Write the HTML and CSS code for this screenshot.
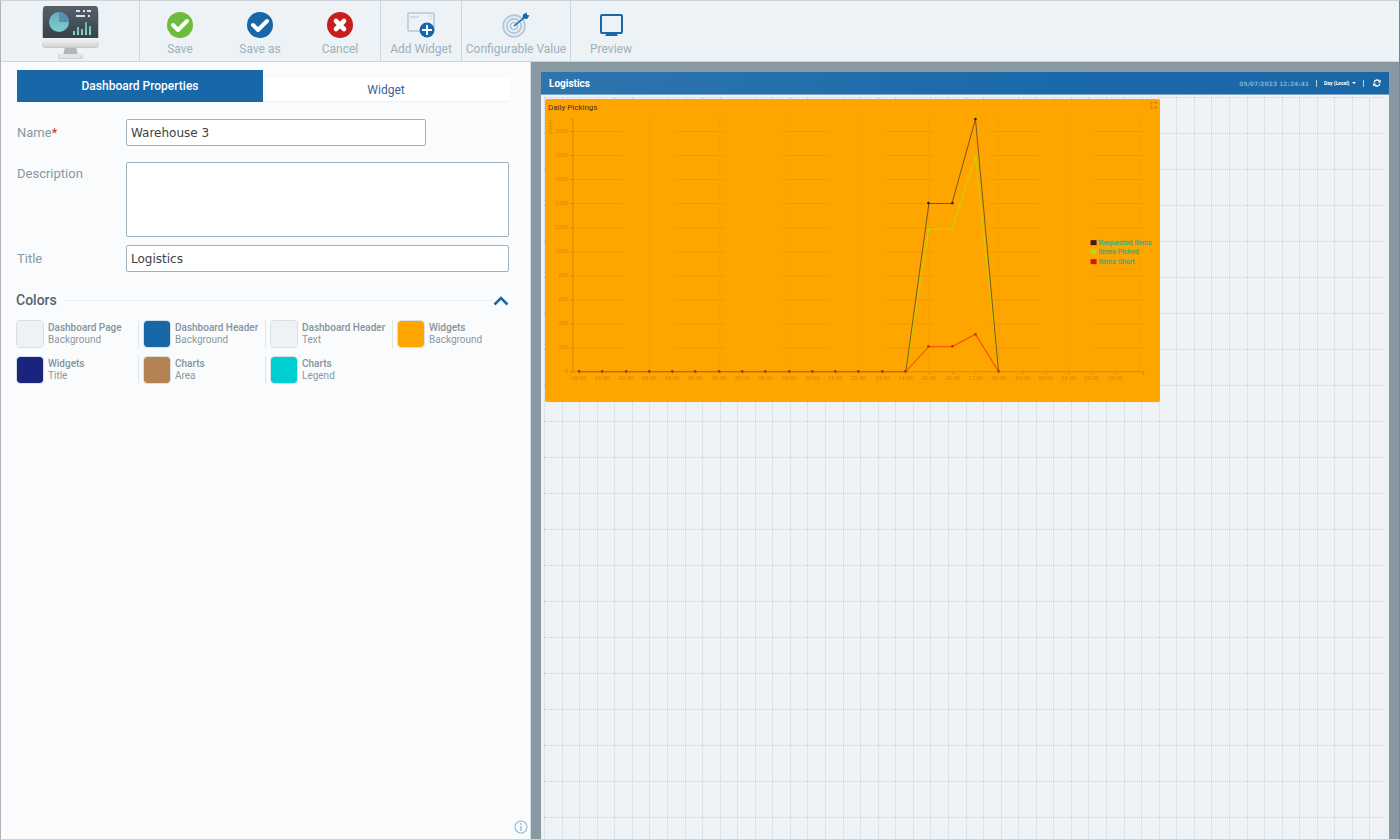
FILE: index.html
```html
<!DOCTYPE html>
<html lang="en">
<head>
<meta charset="utf-8">
<title>Dashboard editor</title>
<link rel="stylesheet" href="styles.css">
</head>
<body>
<div class="app">
  <header class="toolbar">
    <div class="brand">
      <svg width="58" height="56" viewBox="0 0 58 56" aria-hidden="true">
        <defs>
          <linearGradient id="screen" x1="0" y1="0" x2="0" y2="1"><stop offset="0" stop-color="#566069"/><stop offset="1" stop-color="#36424c"/></linearGradient>
          <linearGradient id="chin" x1="0" y1="0" x2="0" y2="1"><stop offset="0" stop-color="#f4f4f4"/><stop offset="1" stop-color="#d3d5d6"/></linearGradient>
          <linearGradient id="bars" x1="0" y1="0" x2="0" y2="1"><stop offset="0" stop-color="#5ea5b4"/><stop offset="1" stop-color="#8fd6c4"/></linearGradient>
          <linearGradient id="pie" x1="0" y1="0" x2="0" y2="1"><stop offset="0" stop-color="#62acc0"/><stop offset="1" stop-color="#7fd0cc"/></linearGradient>
        </defs>
        <path d="M24 42h11l2 9H22z" fill="#b4b7ba"/>
        <rect x="17" y="49" width="25" height="5" rx="2" fill="#cfd2d4"/>
        <rect x="18" y="49" width="23" height="4" rx="2" fill="#e2e4e5"/>
        <rect x="1" y="4" width="57" height="39" rx="4" fill="#c4c8cb"/>
        <path d="M1 33h57v5a4 4 0 0 1-4 4H5a4 4 0 0 1-4-4z" fill="url(#chin)"/>
        <path d="M2 33V4a3 3 0 0 1 3-3h49a3 3 0 0 1 3 3v29z" fill="url(#screen)"/>
        <circle cx="18" cy="17" r="10" fill="url(#pie)"/>
        <path d="M18 7a10 10 0 0 1 10 10H18z" fill="#5b8db0"/>
        <path d="M35 6h4M42 6h2M46 6h4M35 11h9M47 11h2" stroke="#dde3e8" stroke-width="2"/>
        <path d="M32 26h2v4h-2zM36 22h2v8h-2zM40 24h2v6h-2zM44 17h2v13h-2zM48 21h2v9h-2z" fill="url(#bars)"/>
      </svg>
    </div>
    <div class="group">
      <button class="tool" type="button">
        <svg width="26" height="26" viewBox="0 0 26 26" aria-hidden="true"><circle cx="13" cy="13" r="13" fill="#6cbb3c"/><path d="M6 13l5 5 9-9" fill="none" stroke="#fff" stroke-width="4" stroke-linecap="round" stroke-linejoin="round"/></svg>
        <span>Save</span></button>
      <button class="tool" type="button">
        <svg width="26" height="26" viewBox="0 0 26 26" aria-hidden="true"><circle cx="13" cy="13" r="13" fill="#1767a9"/><path d="M6 13l5 5 9-9" fill="none" stroke="#fff" stroke-width="4" stroke-linecap="round" stroke-linejoin="round"/></svg>
        <span>Save as</span></button>
      <button class="tool" type="button">
        <svg width="26" height="26" viewBox="0 0 26 26" aria-hidden="true"><circle cx="13" cy="13" r="13" fill="#c81e20"/><path d="M9 9l8 8M17 9l-8 8" stroke="#fff" stroke-width="4.6" stroke-linecap="round"/></svg>
        <span>Cancel</span></button>
    </div>
    <div class="group">
      <button class="tool" type="button">
        <svg width="28" height="26" viewBox="0 0 28 26" aria-hidden="true"><rect x="1" y="1" width="26" height="18" rx="1" fill="#edf2f6" stroke="#b3c9da" stroke-width="1.5"/><path d="M3 5h9M22 4h1M24 4h1M22 7h1M24 7h1" stroke="#b3c9da" stroke-width="1.2"/><circle cx="20" cy="18" r="7.500" fill="#1767a9"/><path d="M20 13v10M15 18h10" stroke="#fff" stroke-width="2"/></svg>
        <span>Add Widget</span></button>
    </div>
    <div class="group">
      <button class="tool wide" type="button">
        <svg width="28" height="26" viewBox="0 0 28 26" aria-hidden="true"><g fill="none" stroke="#b3c9da" stroke-width="1.900"><circle cx="12" cy="14" r="10.800"/><circle cx="12" cy="14" r="7.200"/><circle cx="12" cy="14" r="3.600"/></g><path d="M12 14l11-9" stroke="#1767a9" stroke-width="1.600"/><path d="M20.500 6.500l.5-4L24.500.500l.5 2.500 2.500.5-2.500 3.500z" fill="#1767a9"/></svg>
        <span>Configurable Value</span></button>
    </div>
    <div class="group last">
      <button class="tool" type="button">
        <svg width="26" height="26" viewBox="0 0 26 26" aria-hidden="true"><rect x="3" y="3" width="21" height="18" rx="1" fill="none" stroke="#1767a9" stroke-width="2"/><path d="M9 21h9l2 3H7z" fill="#1767a9"/></svg>
        <span>Preview</span></button>
    </div>
  </header>

  <main class="workspace">
    <section class="panel">
      <div class="tabs" role="tablist">
        <button class="tab active" type="button" role="tab" aria-selected="true">Dashboard Properties</button>
        <button class="tab" type="button" role="tab" aria-selected="false">Widget</button>
      </div>
      <form class="form">
        <label for="name">Name<span class="required">*</span></label>
        <input class="short" id="name" type="text" value="Warehouse 3">
        <label for="description">Description</label>
        <textarea id="description"></textarea>
        <label for="title">Title</label>
        <input id="title" type="text" value="Logistics">
      </form>
      <div class="section-head">
        <h2>Colors</h2>
        <hr>
        <button class="collapse" type="button" aria-label="Collapse colors">
          <svg width="16" height="12" viewBox="0 0 16 12" aria-hidden="true"><path d="M1.500 10.500L8 4l6.500 6.500" fill="none" stroke="#1767a9" stroke-width="2.500"/></svg>
        </button>
      </div>
      <div class="swatches">
        <label class="swatch"><input type="color" value="#eef2f5"><span><b>Dashboard Page</b><br>Background</span></label>
        <label class="swatch"><input type="color" value="#1767a9"><span><b>Dashboard Header</b><br>Background</span></label>
        <label class="swatch"><input type="color" value="#eef2f5"><span><b>Dashboard Header</b><br>Text</span></label>
        <label class="swatch"><input type="color" value="#ffa500"><span><b>Widgets</b><br>Background</span></label>
        <label class="swatch"><input type="color" value="#1a237e"><span><b>Widgets</b><br>Title</span></label>
        <label class="swatch"><input type="color" value="#b58352"><span><b>Charts</b><br>Area</span></label>
        <label class="swatch"><input type="color" value="#00ced1"><span><b>Charts</b><br>Legend</span></label>
      </div>
      <button class="info" type="button" aria-label="Information">
        <svg width="14" height="14" viewBox="0 0 14 14" aria-hidden="true"><circle cx="7" cy="7" r="6" fill="none" stroke="#9dbdd0" stroke-width="1.200"/><path d="M7 3v2M7 6v5" stroke="#9dbdd0" stroke-width="1.400"/></svg>
      </button>
    </section>

    <section class="stage">
      <div class="dashboard">
        <div class="dash-head">
          <h1>Logistics</h1>
          <time>05/07/2023 12:24:41</time>
          <i class="bar"></i>
          <label class="period">
            <select aria-label="Period"><option>Day (Local)</option></select>
            <svg width="4" height="2" viewBox="0 0 4 2" aria-hidden="true"><path d="M0 0h4L2 2z" fill="#fff"/></svg>
          </label>
          <i class="bar"></i>
          <button class="refresh" type="button" aria-label="Refresh">
            <svg width="8" height="8" viewBox="0 0 8 8" aria-hidden="true"><path d="M1 3.500A3 3 0 0 1 6.200 2M7 4.500A3 3 0 0 1 1.800 6" fill="none" stroke="#fff" stroke-width="1.300"/><path d="M7.800.5v3h-3zM.2 7.500v-3h3z" fill="#fff"/></svg>
          </button>
        </div>
        <div class="canvas">
          <div class="columns" id="columns"></div>
          <div class="rows" id="rows"></div>
          <article class="widget">
            <svg class="chart" id="chart" viewBox="545 99 614 303" role="img" aria-label="Daily Pickings">
              <text class="chart-title" x="548" y="110">Daily Pickings</text>
              <path d="M1150.500 104.500v-2h1.500M1153.500 102.500h2v1.500M1155.500 106v2h-2M1152 108h-1.500v-2" fill="none" stroke="#d87000"/>
              <text class="axis-title" transform="translate(552 134) rotate(-90)">Items</text>
              <g id="grid"></g>
              <g fill="none">
                <path class="axis" d="M571 118.500h2v253M570 371.500h573v3"/>
                <path d="M579 371.500H905" stroke="#b86004"/>
                <path d="M905.500 371L928.500 229H951.500L975 157L998 371" stroke="#c6d400"/>
                <path d="M905.500 371L928.500 203.500H951.500L975 119L998 371" stroke="#604b28" stroke-opacity=".85"/>
                <path d="M905.500 371L928.500 346.500H951.500L975 334L998 371" stroke="#f04a00"/>
              </g>
              <g id="points"></g>
              <g class="legend">
                <rect x="1090" y="240" width="6" height="5" fill="#402116"/><text x="1098" y="245">Requested Items</text>
                <rect x="1090" y="249" width="6" height="5" fill="#b8dc10"/><text x="1098" y="254">Itmes Picked</text>
                <rect x="1090" y="259" width="6" height="5" fill="#c81e10"/><text x="1098" y="264">Items Short</text>
              </g>
            </svg>
          </article>
        </div>
      </div>
    </section>
  </main>
</div>
<script src="chart.js"></script>
</body>
</html>
```
FILE: styles.css
```css
* { box-sizing: border-box; }
body { margin: 0; font-family: Roboto, "Liberation Sans", sans-serif; background: #fafbfd; }
button { border: 0; padding: 0; background: none; font-family: inherit; }
svg { display: block; }
.app { display: flex; flex-direction: column; min-height: 100vh; border: 1px solid #ccd4d9; border-left-color: #b0b2b6; border-right-color: #76858e; }

.toolbar { display: flex; height: 61px; background: #edf2f6; border-bottom: 1px solid #ccd6dc; }
.brand { width: 139px; display: flex; justify-content: center; padding-top: 4px; border-right: 1px solid #ccd6dc; }
.group { display: flex; border-right: 1px solid #ccd6dc; }
.group.last { border-right: 0; }
.tool { width: 80px; display: flex; flex-direction: column; align-items: center; gap: 3px; padding-top: 11px; font-size: 12px; line-height: 16px; color: #9db0ba; white-space: nowrap; }
.tool.wide { width: 108px; }

.workspace { flex: 1; display: flex; }
.panel { width: 530px; display: flex; flex-direction: column; padding: 8px 21px 0 16px; border-right: 1px solid #d4dee4; background: #fafbfd; }
.tabs { display: flex; align-items: flex-end; }
.tab { flex: 1; height: 24px; font-size: 12px; background: #fff; color: #3a6499; border-bottom: 1px solid #eef2f4; }
.tab.active { height: 32px; background: #1767a9; color: #fff; font-weight: 500; border-bottom: 0; }

.form { display: grid; grid-template-columns: 109px 1fr; padding-top: 17px; align-items: start; }
.form label { font-size: 13px; line-height: 27px; color: #8798a1; }
.form label[for="description"] { line-height: 23px; }
.required { color: #d03030; }
.form input, .form textarea { width: 100%; height: 27px; margin: 0; padding: 0 4px; border: 1px solid #9fb1bb; border-radius: 2px; background: #fff; color: #3c4145; font: 12px "DejaVu Sans", sans-serif; resize: none; outline: 0; }
.form .short { width: 300px; margin-bottom: 16px; }
.form textarea { height: 75px; margin-bottom: 8px; }

.section-head { display: flex; align-items: center; height: 20px; margin-top: 18px; margin-left: -1px; }
.section-head h2 { margin: 0; font-size: 14px; line-height: 20px; font-weight: 500; color: #566570; }
.section-head hr { flex: 1; margin: 0 0 0 8px; border: 0; border-top: 1px solid #eaeff3; }

.swatches { display: grid; grid-template-columns: repeat(4, 127px); grid-auto-rows: 28px; gap: 8px 0; margin: 10px -20px 0 -1px; }
.swatch { display: flex; gap: 4px; margin-right: 4px; font-size: 10px; line-height: 12px; color: #8a999f; white-space: nowrap; border-right: 1px solid #e0e6ea; }
.swatch b { font-weight: 500; color: #84949c; }
.swatch span { padding-top: 2px; }
.swatch:nth-child(4), .swatch:nth-child(7) { border-right: 0; }
.swatch input { flex: none; width: 28px; height: 28px; padding: 0; border: 1px solid #d8dfe4; border-radius: 4px; background: none; appearance: none; overflow: hidden; }
.swatch input::-webkit-color-swatch-wrapper { padding: 0; }
.swatch input::-webkit-color-swatch { border: 0; border-radius: 3px; }
.info { margin: auto -19px 5px auto; }

.stage { flex: 1; min-width: 0; display: flex; padding: 10px 10px 0; background: #8899a4; }
.dashboard { flex: 1; min-width: 0; display: flex; flex-direction: column; background: #eef2f5; }
.dash-head { display: flex; align-items: center; height: 22px; padding: 0 8px; background: linear-gradient(100deg, #2e75ae, #1a69aa 60%, #1a67a8); box-shadow: 0 1px 0 #7fa5c9; color: #fff; }
.dash-head h1 { margin: 0 auto 0 0; font-size: 10px; font-weight: 700; }
.dash-head time { font: bold 6px "DejaVu Sans", sans-serif; color: #82afd3; }
.bar { width: 1px; height: 7px; margin: 0 7px; background: #b7d3e8; }
.period { display: flex; align-items: center; gap: 2px; }
.period select { appearance: none; border: 0; padding: 0; background: none; color: #fff; font: bold 5px Roboto, sans-serif; }
.refresh { margin-left: 2px; }

.canvas { flex: 1; display: grid; padding: 3px 3px 0; }
.columns, .rows, .widget { grid-area: 1 / 1; }
.columns { display: flex; margin-right: -1px; }
.columns i { flex: 1; border-left: 1px dotted #c9d3d9; }
.rows { height: 0; min-height: 100%; overflow: hidden; }
.rows i { display: block; height: 36px; border-top: 1px dotted #c9d3d9; }
.widget { align-self: start; width: 73%; margin: 2px 0 0 1px; background: #ffa500; border-radius: 2px; }
.chart { width: 100%; }
.chart-title { font: 8px Roboto, sans-serif; fill: #4a2f2c; }
.axis-title, .tick { font: 5px "DejaVu Sans", sans-serif; fill: #cc8408; }
.tick.value { text-anchor: end; }
.tick.hour { text-anchor: middle; }
.axis { stroke: #d88a04; }
.line { stroke: #f09a02; }
.faint { stroke: #fa9f01; }
.legend text { font: 7px "Liberation Sans", sans-serif; fill: #4cae70; stroke: #4cae70; stroke-width: .3px; }
```
FILE: chart.js
```javascript
const fill = (id, count) => {
  document.getElementById(id).innerHTML = '<i></i>'.repeat(count);
};
fill('columns', 48);
fill('rows', 60);

const zero = 371;
const hourX = h => Math.round(579 + h * 23.29);
let grid = '';
for (let v = 0; v <= 2000; v += 200) {
  const y = zero - Math.round(v * 0.12);
  grid += `<text class="tick value" x="568" y="${y + 2}">${v}</text>`;
  grid += `<path class="axis" d="M570 ${y + 0.5}h3"/>`;
  if (v > 0) {
    [573, 675, 780, 885, 988, 1093].forEach(x => {
      grid += `<path class="line" d="M${x} ${y + 0.5}h50"/>`;
    });
  }
}
for (let h = 0; h < 24; h++) {
  const x = hourX(h);
  grid += `<text class="tick hour" x="${x}" y="380">${String(h).padStart(2, '0')}:00</text>`;
  grid += `<path class="axis" d="M${x + 0.5} 371v3"/>`;
  if (h && h % 3 === 0) grid += `<path class="faint" d="M${x + 0.5} 118v253"/>`;
}
grid += '<path class="faint" d="M1138.5 118v253"/>';
document.getElementById('grid').innerHTML = grid;

const dots = [];
for (let h = 0; h < 15; h++) dots.push([hourX(h), zero, '#8c3c08']);
[[15, 203, 119], [15, 229, 157], [15, 346, 334]].forEach(([h, flat, peak], i) => {
  const color = ['#3a1d12', '#b8dc10', '#d02a00'][i];
  dots.push([hourX(h), flat, color], [hourX(h + 1), flat, color], [hourX(h + 2), peak, color]);
});
dots.push([hourX(18), zero, '#b03a04']);
document.getElementById('points').innerHTML = dots
  .map(([x, y, c]) => `<circle cx="${x}" cy="${y}" r="1.3" fill="${c}"/>`)
  .join('');
```
